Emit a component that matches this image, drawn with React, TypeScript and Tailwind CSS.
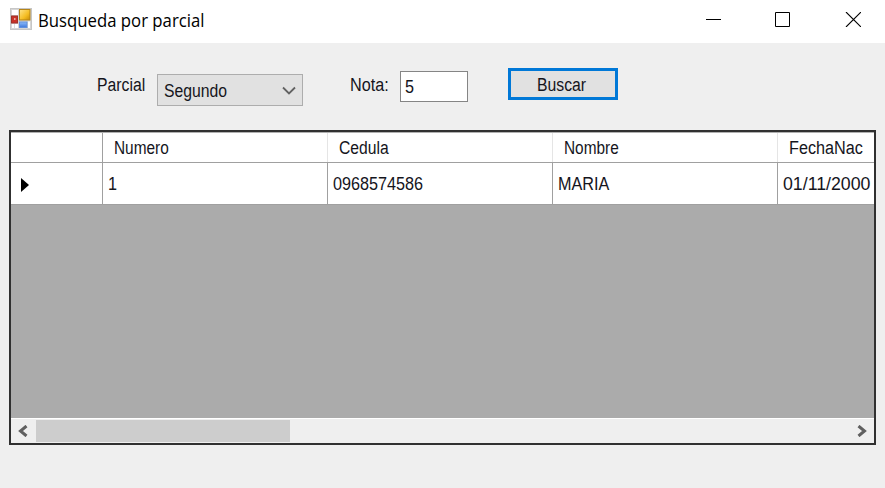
import React from 'react';

function FormIcon() {
  return (
    <svg className="h-[22px] w-[22px] shrink-0" viewBox="0 0 22 22">
      <defs>
        <linearGradient id="gold" x1="0" y1="0" x2="1" y2="1">
          <stop offset="0" stopColor="#ffe48a" />
          <stop offset="0.6" stopColor="#f5bd22" />
          <stop offset="1" stopColor="#c58a08" />
        </linearGradient>
        <linearGradient id="blue" x1="0" y1="0" x2="0" y2="1">
          <stop offset="0" stopColor="#8ebcfa" />
          <stop offset="1" stopColor="#3f78dc" />
        </linearGradient>
      </defs>
      <rect x="0.5" y="0.5" width="21" height="21" fill="#d6d6d6" stroke="#c6c6c6" />
      <rect x="2" y="2" width="6" height="5" fill="#fff" />
      <rect x="2" y="16" width="6" height="4" fill="#fff" />
      <path d="M4.5 16v4" stroke="#ddd" />
      <rect x="18" y="13.5" width="2" height="6.5" fill="#fff" />
      <rect x="9.5" y="1.5" width="10.5" height="10.5" fill="url(#gold)" stroke="#b58418" />
      <rect x="1.5" y="8" width="6" height="7" fill="#c93228" stroke="#9e3028" />
      <rect x="4" y="10" width="1.5" height="2" fill="#eea59c" />
      <rect x="9.5" y="14" width="7.5" height="5.5" fill="url(#blue)" stroke="#6391dc" />
    </svg>
  );
}

const columns = [
  { name: 'Numero', value: '1', head: 'scale-x-[0.855]', cell: 'scale-x-90' },
  { name: 'Cedula', value: '0968574586', head: 'scale-x-[0.87]', cell: 'scale-x-90' },
  { name: 'Nombre', value: 'MARIA', head: 'scale-x-[0.855]', cell: 'scale-x-90' },
  { name: 'FechaNac', value: '01/11/2000', head: 'scale-x-90', cell: 'scale-x-[0.985]' },
];

export default function App() {
  return (
    <div className="flex h-[488px] w-[885px] flex-col overflow-hidden bg-[#efefef] font-['Liberation_Sans',Arial,sans-serif] text-[18px] leading-[20px] whitespace-nowrap text-[#15151c]">
      <header className="flex h-[43px] shrink-0 items-start bg-white pl-[10px]">
        <div className="pt-[8px]"><FormIcon /></div>
        <h1 className="mt-[8px] ml-[6px] origin-left scale-x-[0.93] font-['Open_Sans','Noto_Sans',sans-serif] text-[18px] leading-[24px] text-black">
          Busqueda por parcial
        </h1>
        <svg className="mt-[12px] mr-[24px] ml-auto h-[15px] w-[155px] shrink-0" viewBox="0 0 155 15" fill="none" stroke="#000">
          <path d="M0 7.5H15" />
          <path d="M69.5 0.5H83.5V14.5H69.5Z" />
          <path d="M140 0L155 15M155 0L140 15" strokeWidth="1.1" />
        </svg>
      </header>

      <div className="flex h-[87px] shrink-0 items-start pl-[97px]">
        <label className="mt-[32px] w-[60px]">
          <span className="inline-block origin-left scale-x-[0.875]">Parcial</span>
        </label>
        <div className="mt-[31px] flex h-[32px] w-[146px] items-center justify-between border border-[#adadad] bg-[#e1e1e1] pr-[6px] pl-[6px]">
          <span className="inline-block origin-left scale-x-[0.875] pt-[2px]">Segundo</span>
          <svg className="h-[9px] w-[14px]" viewBox="0 0 14 9" fill="none" stroke="#626262" strokeWidth="1.8">
            <path d="M1 1.5L7 7.5L13 1.5" />
          </svg>
        </div>
        <label className="mt-[32px] ml-[47px] w-[50px]">
          <span className="inline-block origin-left scale-x-[0.9]">Nota:</span>
        </label>
        <div className="mt-[28px] flex h-[31px] w-[68px] items-center border border-[#858585] bg-white pl-[4px]">
          <span className="inline-block origin-left scale-x-90">5</span>
        </div>
        <button className="mt-[25px] ml-[40px] flex h-[32px] w-[110px] items-center border-[3px] border-[#0078d7] bg-[#e1e1e1] pl-[26px]">
          <span className="inline-block origin-left scale-x-[0.875] pt-[2px]">Buscar</span>
        </button>
      </div>

      <div className="ml-[9px] flex h-[315px] w-[867px] flex-col border-2 border-[#303030] bg-[#ababab]">
        <div className="grid h-[31px] shrink-0 grid-cols-[92px_225px_225px_225px_96px] overflow-hidden border-t border-b border-t-[#b0b0b0] border-b-[#a0a0a0] bg-white">
          <div className="border-r border-[#a0a0a0]" />
          {columns.map((c) => (
            <div key={c.name} className="border-r border-[#e5e5e5] pt-[5px] pl-[11px] last:border-r-0">
              <span className={`inline-block origin-left ${c.head}`}>{c.name}</span>
            </div>
          ))}
        </div>
        <div className="grid h-[42px] shrink-0 grid-cols-[92px_225px_225px_225px_96px] overflow-hidden border-b border-[#a0a0a0] bg-white">
          <div className="flex items-center border-r border-[#a0a0a0] pt-[2px] pl-[10px]">
            <svg className="h-[14px] w-[8px]" viewBox="0 0 8 14"><path d="M0 0L8 7L0 14Z" fill="#000" /></svg>
          </div>
          {columns.map((c) => (
            <div key={c.name} className="border-r border-[#a0a0a0] pt-[11px] pl-[5px] last:border-r-0">
              <span className={`inline-block origin-left ${c.cell}`}>{c.value}</span>
            </div>
          ))}
        </div>
        <div className="mt-auto flex h-[25px] shrink-0 items-stretch border-t border-white bg-[#efefef]">
          <div className="flex w-[25px] items-center pl-[7px]">
            <svg className="h-[12px] w-[10px]" viewBox="0 0 10 12" fill="none" stroke="#606060" strokeWidth="3">
              <path d="M8.5 1L2.5 6L8.5 11" />
            </svg>
          </div>
          <div className="mt-px mb-px w-[254px] bg-[#cdcdcd]" />
          <div className="ml-auto flex items-center pr-[7px]">
            <svg className="h-[12px] w-[10px]" viewBox="0 0 10 12" fill="none" stroke="#606060" strokeWidth="3">
              <path d="M1.5 1L7.5 6L1.5 11" />
            </svg>
          </div>
        </div>
      </div>
    </div>
  );
}
